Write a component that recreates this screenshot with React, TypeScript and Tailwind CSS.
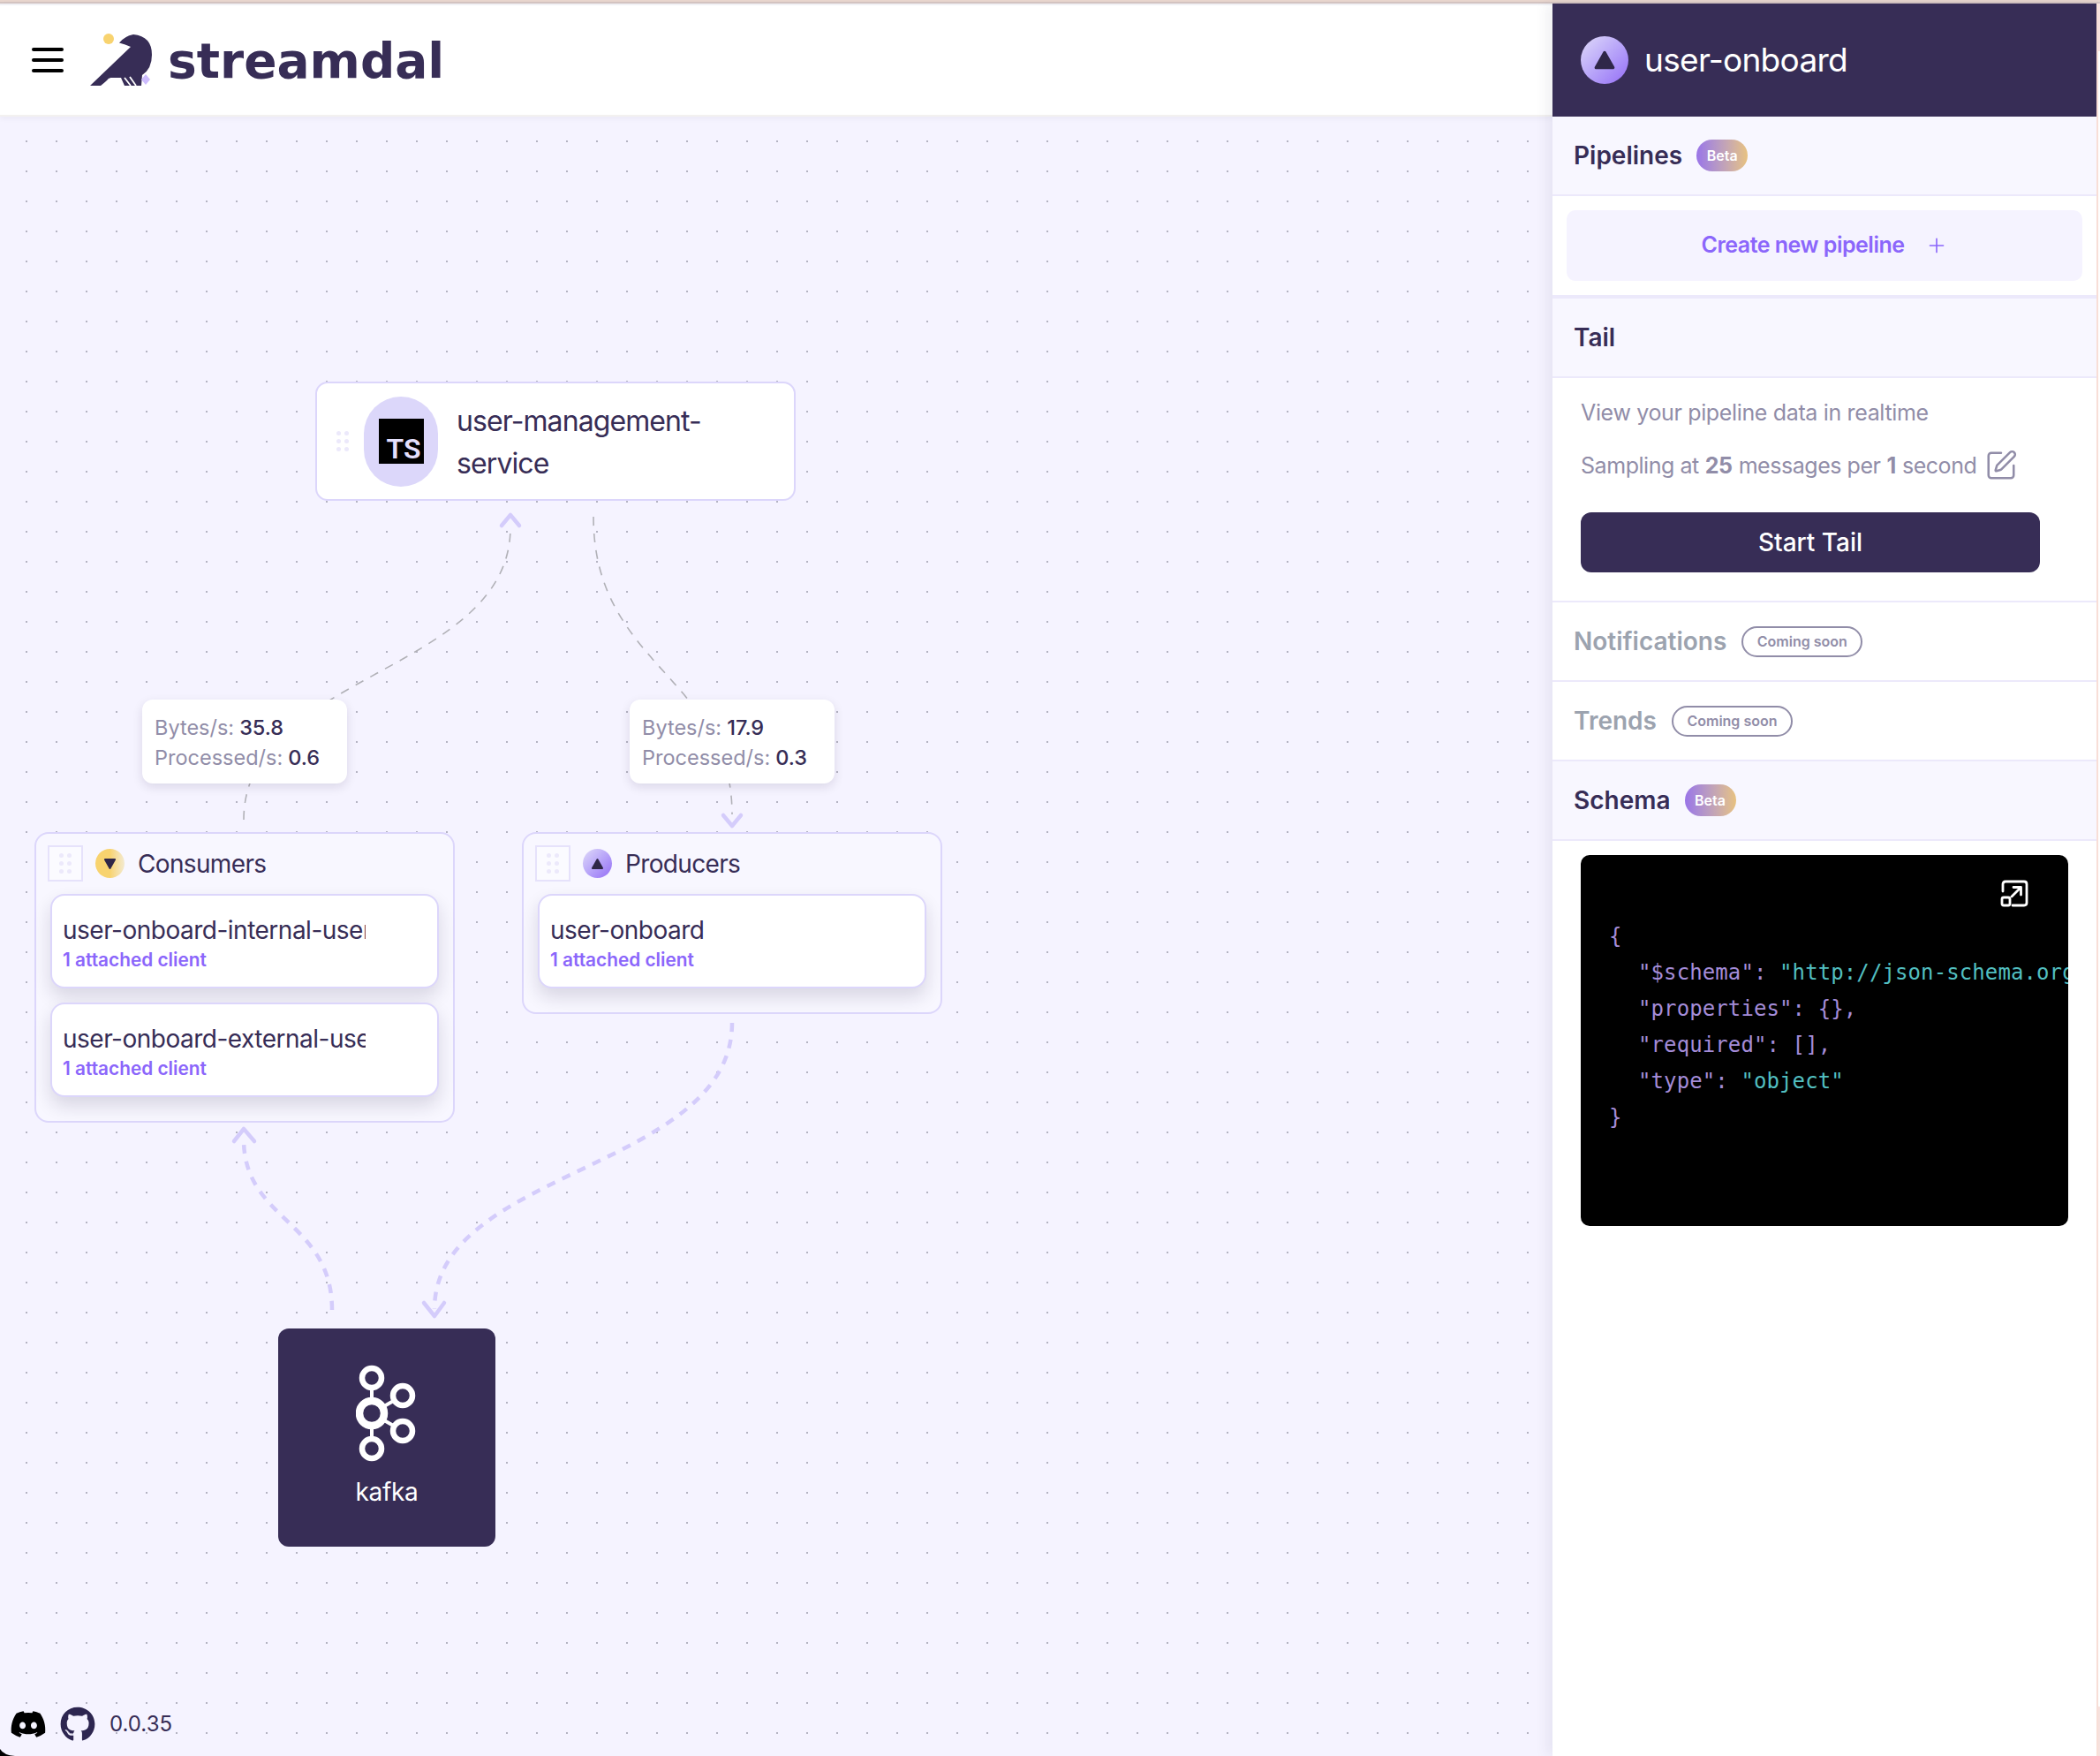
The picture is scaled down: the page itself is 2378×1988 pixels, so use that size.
import { Plus, SquarePen } from "lucide-react";
import { FaDiscord, FaGithub } from "react-icons/fa";

const cardShadow = "shadow-[0_10px_20px_rgba(30,20,60,0.14)]";

function Grip({ boxed }: { boxed?: boolean }) {
  return (
    <div className={boxed ? "flex h-[41px] w-[40px] shrink-0 items-center justify-center border-2 border-[#e6e2fb] bg-[#fbfbff]" : "flex shrink-0 items-center justify-center"}>
      <div className="grid grid-cols-2 gap-x-[4px] gap-y-[4px]">
        {[0, 1, 2, 3, 4, 5].map(i => <span key={i} className="h-[5px] w-[5px] rounded-full bg-[#ece9fb]" />)}
      </div>
    </div>
  );
}

function Triangle({ down, className }: { down?: boolean; className: string }) {
  return (
    <svg viewBox="0 0 24 22" className={className}>
      <polygon points={down ? "3,3 21,3 12,19" : "12,3 21,19 3,19"} fill="#2f2748" stroke="#2f2748" strokeWidth="3" strokeLinejoin="round" />
    </svg>
  );
}

function StatBox({ bytes, processed, className }: { bytes: string; processed: string; className: string }) {
  return (
    <div className={`absolute flex h-[95px] w-[232px] flex-col justify-center rounded-xl bg-white pl-[14px] pt-[2px] text-[23.5px] leading-[34px] shadow-[0_4px_12px_rgba(30,20,60,0.12)] ${className}`}>
      <p className="text-[#918da8]">Bytes/s:<span className="ml-[6px] font-medium text-[#372d56]">{bytes}</span></p>
      <p className="text-[#918da8]">Processed/s:<span className="ml-[6px] font-medium text-[#372d56]">{processed}</span></p>
    </div>
  );
}

function ClientCard({ name }: { name: string }) {
  return (
    <div className={`h-[107px] w-[440px] rounded-2xl border-2 border-[#dcd6fb] bg-white pl-[12px] pt-[19px] ${cardShadow}`}>
      <p className="w-[343px] overflow-hidden whitespace-nowrap text-[28px] leading-[40px] tracking-[-0.5px] text-[#372d56]">{name}</p>
      <p className="text-[20.8px] font-semibold leading-[28px] text-[#8b66fb]">1 attached client</p>
    </div>
  );
}

function Group({ title, down, clients, className }: { title: string; down?: boolean; clients: string[]; className: string }) {
  return (
    <div className={`absolute w-[476px] rounded-2xl border-2 border-[#dcd6fb] bg-[#f8f7ff] pl-[13px] pt-[13px] ${className}`}>
      <div className="flex h-[41px] items-center">
        <Grip boxed />
        <div className={`ml-[14px] flex h-[33px] w-[33px] items-center justify-center rounded-full ${down ? "bg-gradient-to-r from-[#f8d36f] from-50% to-[#f3ead0]" : "bg-gradient-to-br from-[#e0daf8] to-[#956cf5]"}`}>
          <Triangle down={down} className="h-[14px] w-[15px]" />
        </div>
        <span className="ml-[15px] text-[28px] tracking-[-0.65px] text-[#372d56]">{title}</span>
      </div>
      <div className="ml-[3px] mt-[14px] flex flex-col gap-[16px]">
        {clients.map(c => <ClientCard key={c} name={c} />)}
      </div>
    </div>
  );
}

function Edges() {
  return (
    <svg className="absolute inset-0 h-full w-full" fill="none" strokeLinecap="round" strokeLinejoin="round">
      <g stroke="#b1b1b7" strokeWidth="1.6" strokeDasharray="10 9" strokeLinecap="butt">
        <path d="M276 796 C276 630 578 630 578 465" />
        <path d="M672 453 C672 623 829 635 829 790" />
      </g>
      <g stroke="#d4ccfb" strokeWidth="4.5" strokeDasharray="10 9" strokeLinecap="butt">
        <path d="M376 1351 C376 1250 276 1250 276 1158" />
        <path d="M829 1026 C829 1192 492 1192 492 1350" />
      </g>
      <g stroke="#d4ccfb" strokeWidth="4.5">
        <polyline points="568,463 578,451 588,463" />
        <polyline points="819,791 829,803 839,791" />
        <polyline points="265,1160 276,1146 288,1160" />
        <polyline points="480,1343 492,1358 503,1343" />
      </g>
    </svg>
  );
}

function KafkaIcon() {
  return (
    <svg viewBox="0 0 70 110" className="h-[110px] w-[70px]" fill="none" stroke="#fff">
      <path d="M18 15 V95 M18 55 L53 35 M18 55 L53 75" strokeWidth="4" />
      <circle cx="18" cy="55" r="14" strokeWidth="8.5" fill="#372d56" />
      <circle cx="18" cy="15" r="11" strokeWidth="6.5" fill="#372d56" />
      <circle cx="18" cy="95" r="11" strokeWidth="6.5" fill="#372d56" />
      <circle cx="53" cy="35" r="11" strokeWidth="6.5" fill="#372d56" />
      <circle cx="53" cy="75" r="11" strokeWidth="6.5" fill="#372d56" />
    </svg>
  );
}

function Logo() {
  return (
    <svg viewBox="100 36 76 64" className="h-[64px] w-[76px]">
      <circle cx="123" cy="44" r="6" fill="#f8d36f" />
      <path d="M102 97 L148 53 Q142 50 135 48.500 Q141 41 151 39 Q172 41 172 62 Q172 78 161 85 L160 97 L141 97 L137 88 L125 88 L114 97 Z" fill="#372d56" />
      <path d="M117 97 L124 89 M141 88 L148 97 M147 87 L154 97" stroke="#fff" strokeWidth="1.800" />
      <polygon points="165,84 170,90 165,96 160,90" fill="#cdbcfd" />
    </svg>
  );
}

function SectionHead({ title, beta, soon, tinted }: { title: string; beta?: boolean; soon?: boolean; tinted?: boolean }) {
  return (
    <div className={`flex h-[90px] items-center border-b-2 border-[#ece9fb] pl-[24px] ${tinted ? "bg-[#f8f7ff]" : "bg-white"}`}>
      <h3 className={`text-[28px] font-semibold ${soon ? "text-[#9ca3af]" : "text-[#372d56]"}`}>{title}</h3>
      {beta && <span className="ml-[16px] flex h-[36px] w-[58px] items-center justify-center rounded-full bg-gradient-to-r from-[#9a74e8] to-[#e8c27f] text-[16px] font-semibold text-white">Beta</span>}
      {soon && <span className="ml-[17px] flex h-[35px] w-[137px] items-center justify-center rounded-full border-2 border-[#918da8] text-[16px] font-semibold text-[#918da8]">Coming soon</span>}
    </div>
  );
}

function Schema() {
  const purple = "text-[#a48cd8]";
  const teal = "text-[#52bfc0]";
  return (
    <div className="relative mx-[32px] mt-[16px] h-[420px] w-[552px] overflow-hidden rounded-[10px] bg-black pl-[32px] pt-[72px] [font-family:'DejaVu_Sans_Mono',monospace] text-[24px] leading-[41px] tracking-[0.1px] whitespace-pre">
      <svg viewBox="0 0 32 32" className="absolute right-[45px] top-[28px] h-[32px] w-[32px]" fill="none" stroke="#fff" strokeWidth="2.800" strokeLinecap="round" strokeLinejoin="round">
        <path d="M3 13 V5 Q3 2 6 2 H27 Q30 2 30 5 V26 Q30 29 27 29 H14" />
        <path d="M13 19 L23 9 M15 8.500 H23.500 V17" />
        <rect x="2" y="20" width="9" height="9" rx="2" />
      </svg>
      <div className={purple}>{"{"}</div>
      <div className={`pl-[33px] ${purple}`}>{"\"$schema\": "}<span className={teal}>"http://json-schema.org/draft-07/schema#"</span></div>
      <div className={`pl-[33px] ${purple}`}>{"\"properties\": {},"}</div>
      <div className={`pl-[33px] ${purple}`}>{"\"required\": [],"}</div>
      <div className={`pl-[33px] ${purple}`}>{"\"type\": "}<span className={teal}>"object"</span></div>
      <div className={purple}>{"}"}</div>
    </div>
  );
}

export default function App() {
  return (
    <div className="relative flex h-[1988px] w-[2378px] flex-col overflow-hidden bg-white [font-family:Inter,sans-serif]">
      <div className="h-[4px] w-full shrink-0 border-b-2 border-[#d5c5c2] bg-[#e8d5cd]" />
      <div className="flex flex-1">
        <main className="flex w-[1758px] flex-col">
          <header className="z-10 flex h-[128px] shrink-0 items-center border-b-2 border-t-2 border-b-[#f3f1f0] border-t-[#f1f1f5] bg-white pl-[36px] shadow-[0_2px_6px_rgba(55,45,86,0.06)]">
            <div className="flex w-[36px] flex-col gap-[8px]">
              <span className="h-[4px] rounded-full bg-black" />
              <span className="h-[4px] rounded-full bg-black" />
              <span className="h-[4px] rounded-full bg-black" />
            </div>
            <div className="ml-[28px]"><Logo /></div>
            <span className="ml-[14px] pt-[2px] [font-family:'DejaVu_Sans',sans-serif] text-[55px] font-bold leading-none text-[#372d56]">streamdal</span>
          </header>

          <div className="relative flex-1 bg-[#f5f3ff] bg-[radial-gradient(#b4b3c2_1px,transparent_1.2px)] bg-[size:34px_34px] bg-[position:13px_11px]">
            <Edges />

            <div className="absolute left-[357px] top-[300px] flex h-[135px] w-[544px] items-center rounded-[14px] border-2 border-[#dcd6fb] bg-white pl-[22px]">
              <Grip />
              <div className="ml-[17px] flex h-[102px] w-[84px] shrink-0 items-center justify-center rounded-full bg-[#dcd7fa]">
                <div className="flex h-[51px] w-[51px] items-end justify-end bg-black pr-[3px] [font-family:Roboto,sans-serif] text-[32px] font-semibold leading-[34px] text-[#e3dffb]">TS</div>
              </div>
              <p className="ml-[21px] w-[330px] pt-[2px] text-[32px] leading-[48px] tracking-[-0.9px] text-[#372d56]">user-management-<br />service</p>
            </div>

            <StatBox bytes="35.8" processed="0.6" className="left-[161px] top-[660px]" />
            <StatBox bytes="17.9" processed="0.3" className="left-[713px] top-[660px]" />

            <Group title="Consumers" down clients={["user-onboard-internal-user", "user-onboard-external-user"]} className="left-[39px] top-[810px] h-[329px]" />
            <Group title="Producers" clients={["user-onboard"]} className="left-[591px] top-[810px] h-[206px]" />

            <div className="absolute left-[315px] top-[1372px] flex h-[247px] w-[246px] flex-col items-center rounded-xl bg-[#372d56] pt-[41px]">
              <KafkaIcon />
              <span className="mt-[14px] text-[28px] leading-[40px] tracking-[-0.3px] text-white">kafka</span>
            </div>

            <div className="absolute bottom-[15px] left-[11px] flex items-center">
              <FaDiscord className="h-[42px] w-[42px] text-black" />
              <FaGithub className="ml-[15px] h-[40px] w-[40px] text-[#2d2650]" />
              <span className="ml-[16px] text-[24px] text-[#372d56]">0.0.35</span>
            </div>

            <svg viewBox="0 0 17 8" className="absolute bottom-0 left-0 h-[8px] w-[17px]"><path d="M0 0 Q4 7 17 8 L0 8 Z" fill="#000" /></svg>
          </div>
        </main>

        <aside className="z-20 flex w-[616px] flex-col bg-white shadow-[-6px_0_14px_rgba(55,45,86,0.08)]">
          <div className="flex h-[128px] shrink-0 items-center bg-[#372d56] pl-[32px]">
            <div className="flex h-[54px] w-[54px] items-center justify-center rounded-full bg-gradient-to-br from-[#e0daf8] to-[#956cf5]">
              <Triangle className="h-[24px] w-[26px]" />
            </div>
            <span className="ml-[18px] text-[37px] tracking-[-0.7px] text-white">user-onboard</span>
          </div>

          <SectionHead title="Pipelines" beta tinted />
          <div className="flex h-[116px] items-start border-b-4 border-[#ece9fb] px-[16px] pt-[16px]">
            <button className="flex h-[80px] w-full items-center justify-center rounded-[10px] bg-[#f5f3ff] text-[25px] font-semibold tracking-[-0.5px] text-[#8b66fb]">
              Create new pipeline
              <Plus className="ml-[23px] h-[26px] w-[26px]" strokeWidth={1.5} />
            </button>
          </div>

          <SectionHead title="Tail" tinted />
          <div className="h-[254px] border-b-2 border-[#ece9fb] pl-[32px] pt-[20px] text-[25px] tracking-[-0.35px] text-[#918da8]">
            <p className="leading-[38px]">View your pipeline data in realtime</p>
            <p className="mt-[22px] flex items-center leading-[38px] tracking-[-0.45px]">
              Sampling at<b className="mx-[7px]">25</b>messages per<b className="mx-[7px]">1</b>second
              <SquarePen className="ml-[9px] h-[38px] w-[38px]" strokeWidth={1.6} />
            </p>
            <button className="mt-[34px] h-[68px] w-[520px] rounded-xl bg-[#372d56] text-[28px] font-medium tracking-normal text-white">Start Tail</button>
          </div>

          <SectionHead title="Notifications" soon />
          <SectionHead title="Trends" soon />
          <SectionHead title="Schema" beta tinted />
          <Schema />
        </aside>
        <div className="flex w-[4px] shrink-0 flex-col justify-between border-l-2 border-[#fbe1d9] bg-white">
          <div className="h-[54px] bg-[#f9e3df]" />
          <div className="h-[56px] bg-[#f7e2df]" />
        </div>
      </div>
    </div>
  );
}
